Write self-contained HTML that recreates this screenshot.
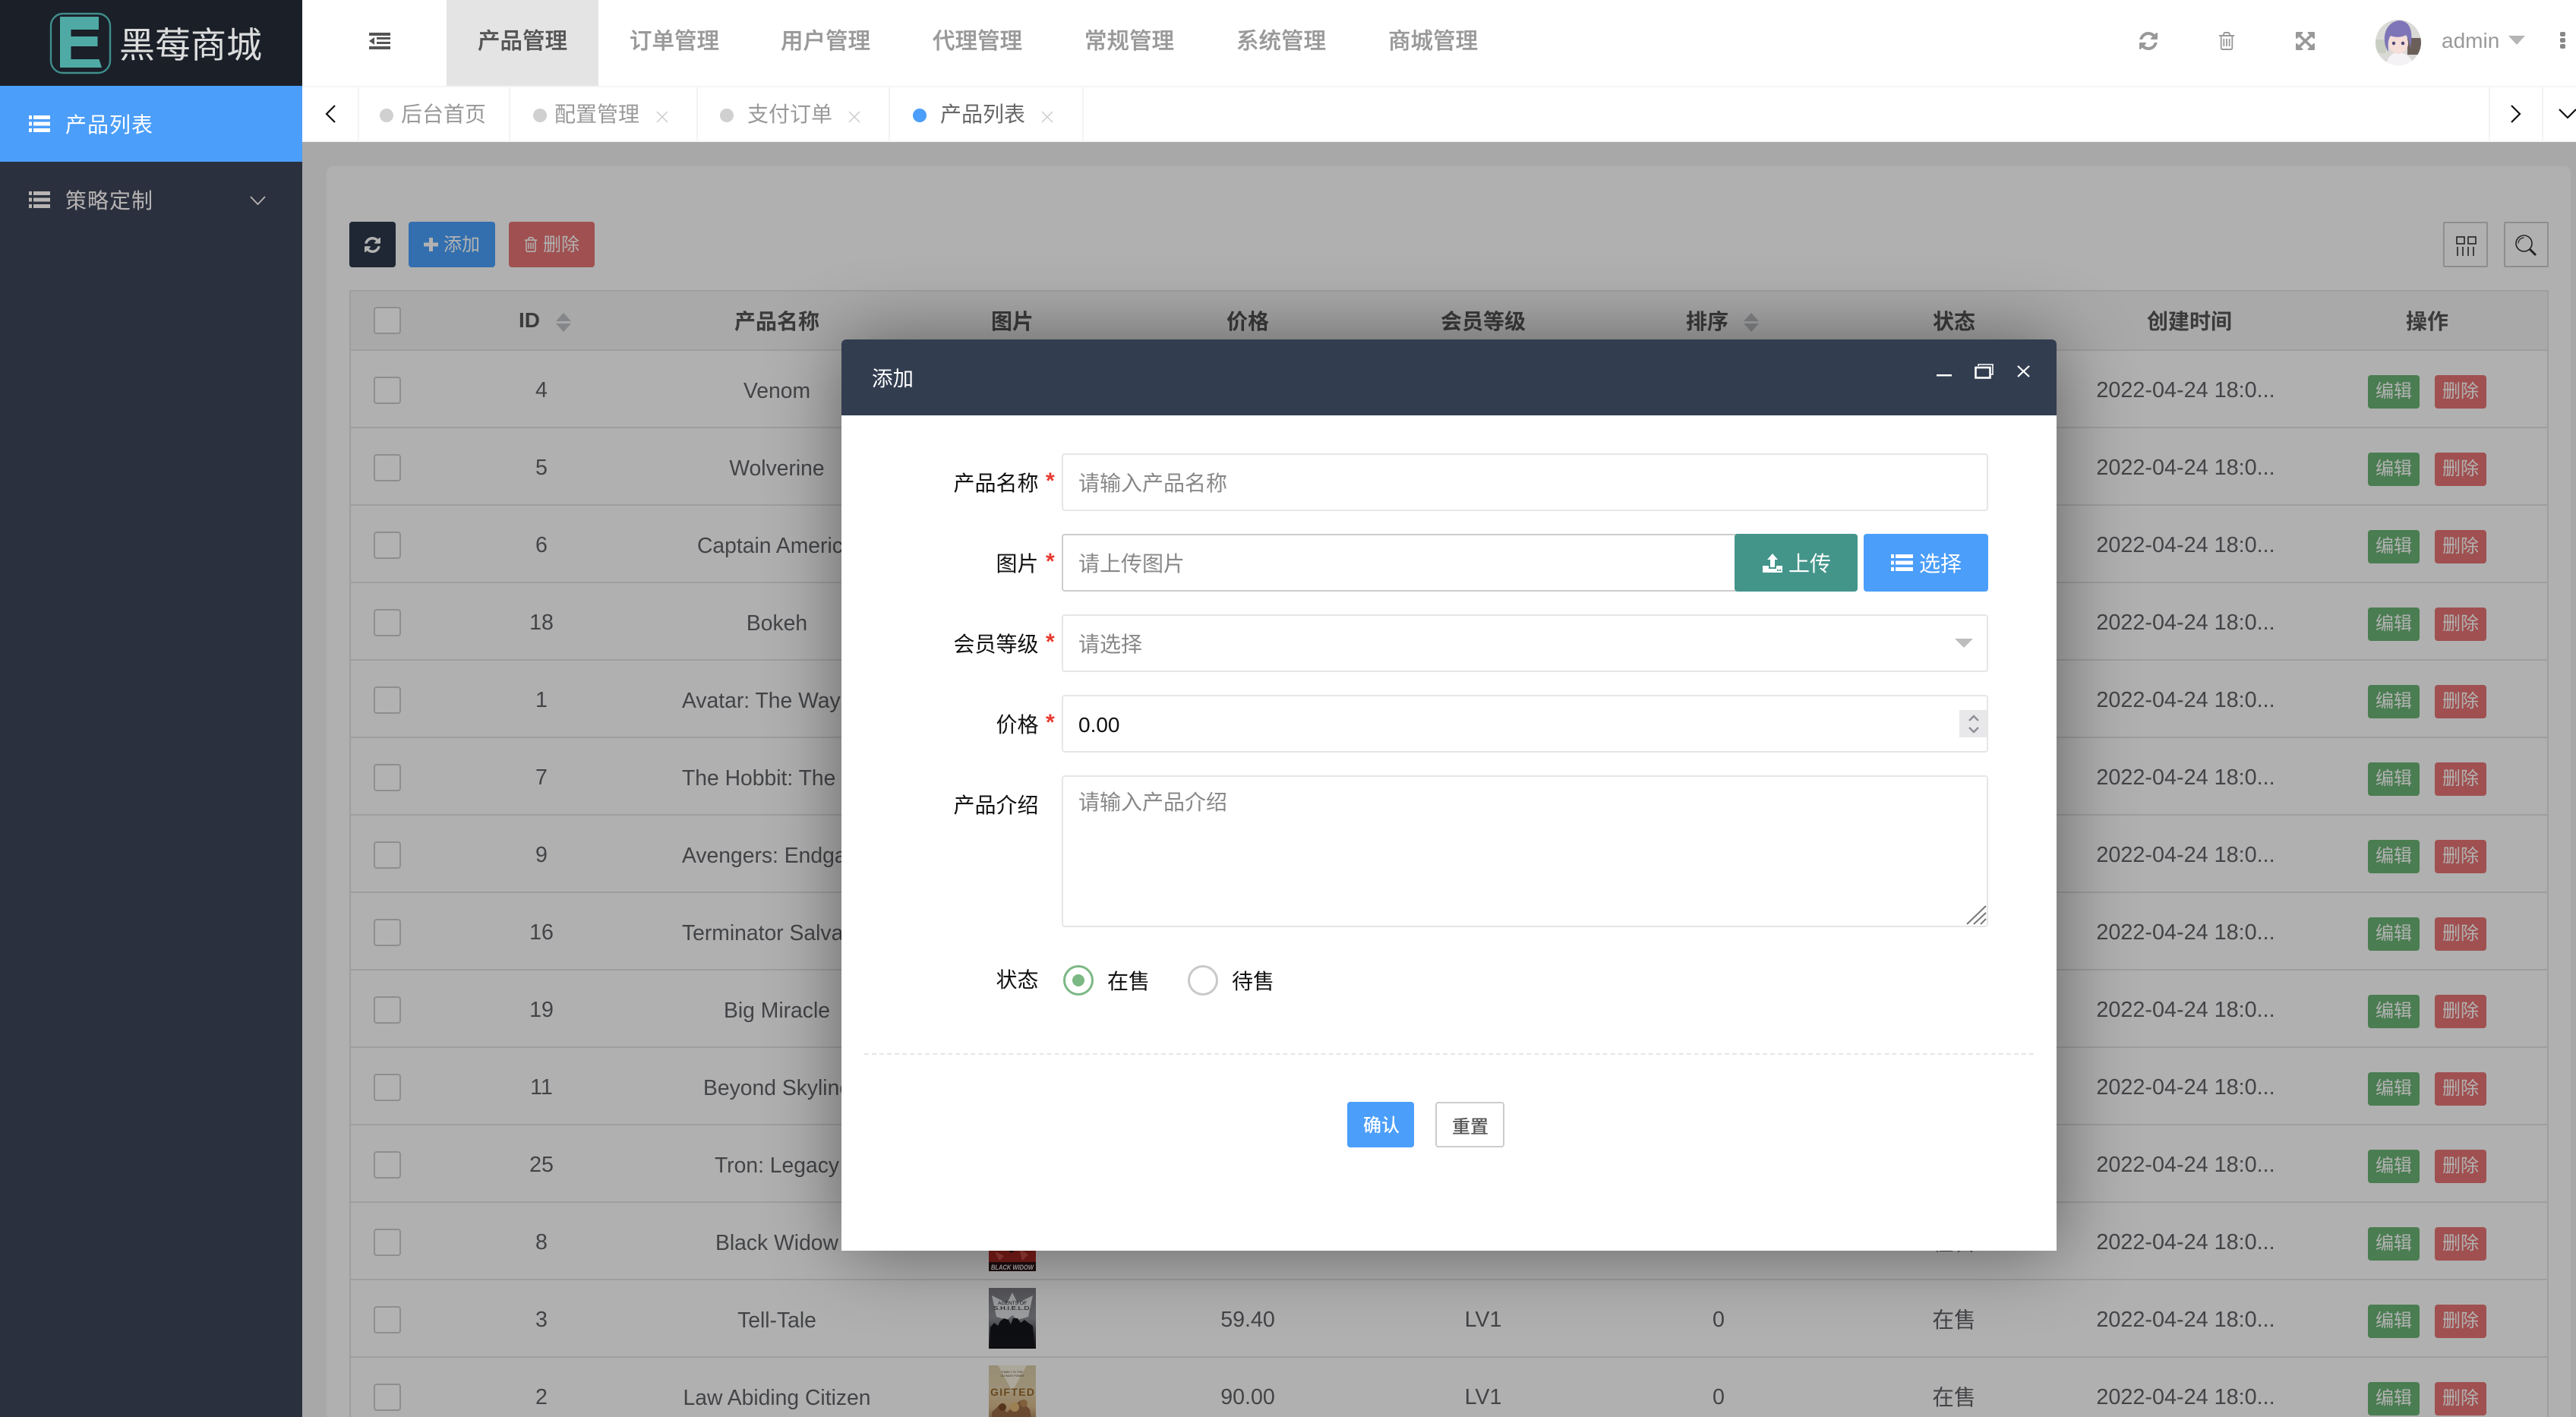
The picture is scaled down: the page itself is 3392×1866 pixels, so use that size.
<!DOCTYPE html>
<html lang="zh">
<head>
<meta charset="utf-8">
<title>黑莓商城</title>
<style>
*{box-sizing:border-box;margin:0;padding:0}
html,body{width:3392px;height:1866px;overflow:hidden;background:#fff}
body{position:relative;font-family:"Liberation Sans","Noto Sans CJK SC",sans-serif;font-size:28px}
.t{position:absolute;white-space:nowrap;line-height:40px;height:40px}
svg{position:absolute;display:block;overflow:visible}
#side{position:absolute;left:0;top:0;width:398px;height:1866px;background:#2a303d}
#logo{position:absolute;left:0;top:0;width:398px;height:113px;background:#1a1f28}
#act{position:absolute;left:0;top:113px;width:398px;height:100px;background:#4b9ef9}
#top{position:absolute;left:398px;top:0;width:2994px;height:113px;background:#fff}
.nav{color:#999;font-weight:500;-webkit-text-stroke:.3px #999}
#tabs{position:absolute;left:398px;top:113px;width:2994px;height:74px;background:#fff;border-top:2px solid #f5f5f5;border-bottom:2px solid #f5f5f5}
.sep{position:absolute;top:115px;width:2px;height:70px;background:#f3f3f3}
.dot{position:absolute;width:18px;height:18px;border-radius:50%;background:#d0d0d0;top:143px}
.tt{color:#999;top:131px}
.x{position:absolute;top:146px;width:16px;height:16px}
#content{position:absolute;left:398px;top:187px;width:2994px;height:1679px;overflow:hidden;background:#f1f1f1}
#card{position:absolute;left:32px;top:32px;width:2955px;height:1700px;background:#fcfcfc;border-radius:8px}
#shade{position:absolute;left:0;top:0;width:2994px;height:1679px;background:rgba(0,0,0,.3)}
table{position:absolute;left:62px;top:195px;width:2896px;border-collapse:separate;border-spacing:0;table-layout:fixed;font-size:28.6px;color:#606266}
th{height:80px;background:#f2f2f2;color:#555;font-size:28px;font-weight:bold;border-top:2px solid #e2e2e2;border-bottom:2px solid #e2e2e2;text-align:center;white-space:nowrap;position:relative}
td{height:102px;border-bottom:2px solid #e2e2e2;text-align:center;white-space:nowrap;overflow:hidden;position:relative}
td:nth-child(2),td:nth-child(3),td:nth-child(5),td:nth-child(6),td:nth-child(7),td:nth-child(9){padding-top:4px}
td:nth-child(9){padding-right:10px;font-size:28.8px}
th:first-child,td:first-child{border-left:2px solid #e2e2e2}
th:last-child,td:last-child{border-right:2px solid #e2e2e2}
.c{display:block;width:36px;height:36px;border:2px solid #ccc;border-radius:4px;margin-left:30px;background:#fff}
td .c{height:36px;position:relative;top:2px}
td.n{text-align:left;font-size:28.3px}
.ops{text-align:left;padding-left:80px}
.ops b{display:inline-block;width:68px;height:44px;border-radius:4px;color:#fff;font-size:24px;font-weight:normal;line-height:44px;text-align:center;position:relative;top:4px}
.g{background:#6ab475;margin-right:20px}
.r{background:#e57373}
.p{display:block;width:62px;height:80px;margin:0 auto;position:relative;overflow:hidden;left:0}
.tb{position:absolute;top:105px;height:60px;border-radius:4px;color:#fff;font-size:24px}
.sa{position:absolute;width:0;height:0;border-left:10px solid transparent;border-right:10px solid transparent}
#dlg{position:absolute;left:710px;top:260px;width:1600px;height:1200px;background:#fff;border-radius:6px 6px 0 0;box-shadow:2px 2px 100px rgba(0,0,0,.45)}
#dh{position:absolute;left:1108px;top:447px;width:1600px;height:100px;background:#323e50;border-radius:6px 6px 0 0}
.in{position:absolute;left:1398px;width:1220px;height:76px;border:2px solid #e6e6e6;border-radius:4px;background:#fff}
.l{color:#111;text-align:right;width:200px;left:1167.500px}
.ph{color:#888;left:1420px}
.st{color:#e8392f;font-weight:bold;left:1377px;font-size:30px}
</style>
</head>
<body>

<div id="side">
  <div id="logo"></div>
  <div id="act"></div>
</div>
<svg style="left:0;top:0" width="398" height="113" viewBox="0 0 398 113">
  <rect x="67" y="18" width="78" height="78" rx="16" fill="none" stroke="#3f8f8b" stroke-width="2.4"/>
  <path d="M79 22H130V39H93.500V48H128.500V61H93.500V78H130.500L134 89H79Z" fill="#4faaa5"/>
</svg>
<div class="t" style="left:157px;top:30px;font-size:47px;line-height:60px;height:60px;color:#ddd">黑莓商城</div>
<svg style="left:38px;top:152px" width="28" height="22"><g fill="#fff"><rect width="4" height="5"/><rect x="6" width="22" height="5"/><rect y="8.500" width="4" height="5"/><rect x="6" y="8.500" width="22" height="5"/><rect y="17" width="4" height="5"/><rect x="6" y="17" width="22" height="5"/></g></svg>
<div class="t" style="left:86px;top:145px;color:#fff;letter-spacing:1px">产品列表</div>
<svg style="left:38px;top:252px" width="28" height="22"><g fill="#b8b4b4"><rect width="4" height="5"/><rect x="6" width="22" height="5"/><rect y="8.500" width="4" height="5"/><rect x="6" y="8.500" width="22" height="5"/><rect y="17" width="4" height="5"/><rect x="6" y="17" width="22" height="5"/></g></svg>
<div class="t" style="left:86px;top:245px;color:#b8b4b4;letter-spacing:1px">策略定制</div>
<svg style="left:329px;top:258px" width="21" height="12"><path d="M1 1L10.500 11L20 1" fill="none" stroke="#b8b4b4" stroke-width="1.800"/></svg>

<div id="top"></div>
<div style="position:absolute;left:588px;top:0;width:200px;height:113px;background:#e4e4e4"></div>
<svg style="left:486px;top:43px" width="28" height="22"><g fill="#555"><rect width="28" height="4"/><rect x="10" y="6" width="18" height="3"/><rect x="10" y="12" width="18" height="3"/><rect y="18" width="28" height="4"/><path d="M7 6V16L0 11Z"/></g></svg>
<div class="t nav" style="left:629px;top:35px;color:#555;-webkit-text-stroke:.3px #555;font-size:29.500px">产品管理</div>
<div class="t nav" style="left:829px;top:35px;font-size:29.500px">订单管理</div>
<div class="t nav" style="left:1028px;top:35px;font-size:29.500px">用户管理</div>
<div class="t nav" style="left:1228px;top:35px;font-size:29.500px">代理管理</div>
<div class="t nav" style="left:1428px;top:35px;font-size:29.500px">常规管理</div>
<div class="t nav" style="left:1628px;top:35px;font-size:29.500px">系统管理</div>
<div class="t nav" style="left:1828px;top:35px;font-size:29.500px">商城管理</div>

<svg style="left:2817px;top:42px" width="24" height="24" viewBox="128 128 1536 1536" preserveAspectRatio="none"><path fill="#999" d="M1639 1056q0 5-1 7-64 268-268 434.500t-478 166.500q-146 0-282.500-55t-243.500-157l-129 129q-19 19-45 19t-45-19-19-45v-448q0-26 19-45t45-19h448q26 0 45 19t19 45-19 45l-137 137q71 66 161 102t187 36q134 0 250-65t186-179q11-17 53-117 8-23 30-23h192q13 0 22.500 9.500t9.500 22.500zm25-800v448q0 26-19 45t-45 19h-448q-26 0-45-19t-19-45 19-45l138-138q-148-137-349-137-134 0-250 65t-186 179q-11 17-53 117-8 23-30 23h-199q-13 0-22.500-9.500t-9.500-22.500v-7q65-268 270-434.500t480-166.500q146 0 284 55.500t245 156.500l130-129q19-19 45-19t45 19 19 45z"/></svg>
<svg style="left:2921px;top:42px" width="22" height="24" viewBox="128 128 1536 1536" preserveAspectRatio="none"><path fill="#999" d="M704 736v576q0 14-9 23t-23 9h-64q-14 0-23-9t-9-23v-576q0-14 9-23t23-9h64q14 0 23 9t9 23zm256 0v576q0 14-9 23t-23 9h-64q-14 0-23-9t-9-23v-576q0-14 9-23t23-9h64q14 0 23 9t9 23zm256 0v576q0 14-9 23t-23 9h-64q-14 0-23-9t-9-23v-576q0-14 9-23t23-9h64q14 0 23 9t9 23zm128 724v-948h-896v948q0 22 7 40.500t14.500 27 10.500 8.500h832q3 0 10.500-8.500t14.500-27 7-40.500zm-672-1076h448l-48-117q-7-9-17-11h-317q-10 2-17 11zm928 32v64q0 14-9 23t-23 9h-96v948q0 83-47 143.500t-113 60.500h-832q-66 0-113-58.500t-47-141.500v-952h-96q-14 0-23-9t-9-23v-64q0-14 9-23t23-9h309l70-167q15-37 54-63t79-26h320q40 0 79 26t54 63l70 167h309q14 0 23 9t9 23z"/></svg>
<svg style="left:3023px;top:42px" width="25" height="24" viewBox="128 128 1536 1536" preserveAspectRatio="none"><path fill="#999" d="M1411 541l-355 355 355 355 144-144q29-31 70-14 39 17 39 59v448q0 26-19 45t-45 19h-448q-42 0-59-40-17-39 14-69l144-144-355-355-355 355 144 144q31 30 14 69-17 40-59 40h-448q-26 0-45-19t-19-45v-448q0-42 40-59 39-17 69 14l144 144 355-355-355-355-144 144q-19 19-45 19-9 0-24-5-40-17-40-59v-448q0-26 19-45t45-19h448q42 0 59 40 17 39-14 69l-144 144 355 355 355-355-144-144q-31-30-14-69 17-40 59-40h448q26 0 45 19t19 45v448q0 42-39 59-13 5-25 5-26 0-45-19z"/></svg>
<svg style="left:3128px;top:26px" width="60" height="60" viewBox="0 0 60 60">
  <defs><clipPath id="av"><circle cx="30" cy="30" r="30"/></clipPath></defs>
  <g clip-path="url(#av)">
    <rect width="60" height="60" fill="#d9d9d6"/>
    <rect x="42" y="24" width="18" height="22" fill="#6b5f5a"/>
    <rect x="0" y="26" width="14" height="18" fill="#c8cfc2"/>
    <path d="M14 60C16 48 22 43 30 43C40 43 48 50 50 60Z" fill="#f4f2f4"/>
    <ellipse cx="30" cy="31" rx="13" ry="14" fill="#f5ddd8"/>
    <path d="M13 34C8 14 20 1 32 1C46 2 50 16 46 38C45 30 43 24 40 20C34 24 24 23 20 21C17 25 16 30 17 42C15 40 14 37 13 34Z" fill="#7d75b8"/>
    <circle cx="24" cy="31" r="2.200" fill="#4a4572"/><circle cx="36" cy="31" r="2.200" fill="#4a4572"/>
  </g>
</svg>
<div class="t" style="left:3215px;top:34px;color:#999">admin</div>
<div style="position:absolute;left:3303px;top:47px;width:0;height:0;border-left:11px solid transparent;border-right:11px solid transparent;border-top:12px solid #b5b5b5"></div>
<svg style="left:3371px;top:42px" width="7" height="22"><g fill="#888"><rect width="7" height="6" rx="2"/><rect y="8" width="7" height="6" rx="2"/><rect y="16" width="7" height="6" rx="2"/></g></svg>

<div id="tabs"></div>
<div class="sep" style="left:471px"></div>
<div class="sep" style="left:670px"></div>
<div class="sep" style="left:917px"></div>
<div class="sep" style="left:1170px"></div>
<div class="sep" style="left:1425px"></div>
<div class="sep" style="left:3277px"></div>
<div class="sep" style="left:3347px"></div>
<svg style="left:428px;top:138px" width="14" height="24"><path d="M13 1L2 12L13 23" fill="none" stroke="#111" stroke-width="2.200"/></svg>
<div class="dot" style="left:500px"></div>
<div class="t tt" style="left:528px">后台首页</div>
<div class="dot" style="left:702px"></div>
<div class="t tt" style="left:730px">配置管理</div>
<svg class="x" style="left:864px"><path d="M1 1L15 15M15 1L1 15" stroke="#ccc" stroke-width="1.500"/></svg>
<div class="dot" style="left:948px"></div>
<div class="t tt" style="left:984px">支付订单</div>
<svg class="x" style="left:1117px"><path d="M1 1L15 15M15 1L1 15" stroke="#ccc" stroke-width="1.500"/></svg>
<div class="dot" style="left:1202px;background:#4b9ef9"></div>
<div class="t tt" style="left:1238px;color:#666">产品列表</div>
<svg class="x" style="left:1371px"><path d="M1 1L15 15M15 1L1 15" stroke="#ccc" stroke-width="1.500"/></svg>
<svg style="left:3306px;top:138px" width="14" height="24"><path d="M1 1L12 12L1 23" fill="none" stroke="#111" stroke-width="2.200"/></svg>
<svg style="left:3369px;top:143px" width="26" height="14"><path d="M1 1L12 12L23 1" fill="none" stroke="#111" stroke-width="2.200"/></svg>

<div id="content">
  <div id="card"></div>

  <div class="tb" style="left:62px;width:61px;background:#2b394a"></div>
  <svg style="left:82px;top:125px" width="21" height="21" viewBox="128 128 1536 1536" preserveAspectRatio="none"><path fill="#fff" d="M1639 1056q0 5-1 7-64 268-268 434.500t-478 166.500q-146 0-282.500-55t-243.500-157l-129 129q-19 19-45 19t-45-19-19-45v-448q0-26 19-45t45-19h448q26 0 45 19t19 45-19 45l-137 137q71 66 161 102t187 36q134 0 250-65t186-179q11-17 53-117 8-23 30-23h192q13 0 22.500 9.500t9.500 22.500zm25-800v448q0 26-19 45t-45 19h-448q-26 0-45-19t-19-45 19-45l138-138q-148-137-349-137-134 0-250 65t-186 179q-11 17-53 117-8 23-30 23h-199q-13 0-22.500-9.500t-9.500-22.500v-7q65-268 270-434.500t480-166.500q146 0 284 55.500t245 156.500l130-129q19-19 45-19t45 19 19 45z"/></svg>
  <div class="tb" style="left:140px;width:114px;background:#4a9ffa"></div>
  <svg style="left:160px;top:126px" width="19" height="18"><path d="M7 0H12V6.500H19V11.500H12V18H7V11.500H0V6.500H7Z" fill="#fff"/></svg>
  <div class="t" style="left:186px;top:116px;color:#fff;font-size:24px">添加</div>
  <div class="tb" style="left:272px;width:113px;background:#e57373"></div>
  <svg style="left:292px;top:125px" width="18" height="20" viewBox="128 128 1536 1536" preserveAspectRatio="none"><path fill="#fff" d="M704 736v576q0 14-9 23t-23 9h-64q-14 0-23-9t-9-23v-576q0-14 9-23t23-9h64q14 0 23 9t9 23zm256 0v576q0 14-9 23t-23 9h-64q-14 0-23-9t-9-23v-576q0-14 9-23t23-9h64q14 0 23 9t9 23zm256 0v576q0 14-9 23t-23 9h-64q-14 0-23-9t-9-23v-576q0-14 9-23t23-9h64q14 0 23 9t9 23zm128 724v-948h-896v948q0 22 7 40.500t14.500 27 10.500 8.500h832q3 0 10.500-8.500t14.500-27 7-40.500zm-672-1076h448l-48-117q-7-9-17-11h-317q-10 2-17 11zm928 32v64q0 14-9 23t-23 9h-96v948q0 83-47 143.500t-113 60.500h-832q-66 0-113-58.500t-47-141.500v-952h-96q-14 0-23-9t-9-23v-64q0-14 9-23t23-9h309l70-167q15-37 54-63t79-26h320q40 0 79 26t54 63l70 167h309q14 0 23 9t9 23z"/></svg>
  <div class="t" style="left:317px;top:116px;color:#fff;font-size:24px">删除</div>

  <div class="tb" style="left:2819px;width:59px;border:2px solid #ccc;border-radius:2px"></div>
  <svg style="left:2836px;top:124px" width="27" height="26"><g fill="none" stroke="#333" stroke-width="1.600"><rect x="1" y="1" width="10" height="9"/><rect x="16" y="1" width="10" height="9"/><path d="M2 14V26M9 14V26M16 14V26M23 14V26"/></g></svg>
  <div class="tb" style="left:2899px;width:59px;border:2px solid #ccc;border-radius:2px"></div>
  <svg style="left:2914px;top:122px" width="28" height="28"><circle cx="11.500" cy="11.500" r="10.500" fill="none" stroke="#333" stroke-width="1.600"/><path d="M4 11.500A7.500 7.500 0 0 1 11.500 4" fill="none" stroke="#333" stroke-width="1.200"/><path d="M19 19L27 27" stroke="#333" stroke-width="3"/></svg>

  <table>
    <colgroup><col style="width:98px"><col style="width:310px"><col style="width:310px"><col style="width:310px"><col style="width:310px"><col style="width:310px"><col style="width:310px"><col style="width:310px"><col style="width:310px"><col></colgroup>
    <tr>
      <th style="text-align:left"><i class="c"></i></th>
      <th style="text-align:left;padding-left:125px">ID</th>
      <th>产品名称</th><th>图片</th><th>价格</th><th>会员等级</th>
      <th style="text-align:left;padding-left:112px">排序</th>
      <th>状态</th><th>创建时间</th><th>操作</th>
    </tr>
    <tr><td style="text-align:left"><i class="c"></i></td><td>4</td><td class="n" style="text-align:center">Venom</td><td></td><td>39.90</td><td>LV1</td><td>0</td><td>在售</td><td>2022-04-24 18:0...</td><td class="ops"><b class="g">编辑</b><b class="r">删除</b></td></tr>
    <tr><td style="text-align:left"><i class="c"></i></td><td>5</td><td class="n" style="text-align:center">Wolverine</td><td></td><td>39.90</td><td>LV1</td><td>0</td><td>在售</td><td>2022-04-24 18:0...</td><td class="ops"><b class="g">编辑</b><b class="r">删除</b></td></tr>
    <tr><td style="text-align:left"><i class="c"></i></td><td>6</td><td class="n" style="padding-left:50px">Captain America</td><td></td><td>39.90</td><td>LV1</td><td>0</td><td>在售</td><td>2022-04-24 18:0...</td><td class="ops"><b class="g">编辑</b><b class="r">删除</b></td></tr>
    <tr><td style="text-align:left"><i class="c"></i></td><td>18</td><td class="n" style="text-align:center">Bokeh</td><td></td><td>39.90</td><td>LV1</td><td>0</td><td>在售</td><td>2022-04-24 18:0...</td><td class="ops"><b class="g">编辑</b><b class="r">删除</b></td></tr>
    <tr><td style="text-align:left"><i class="c"></i></td><td>1</td><td class="n" style="padding-left:30px">Avatar: The Way of Water</td><td></td><td>39.90</td><td>LV1</td><td>0</td><td>在售</td><td>2022-04-24 18:0...</td><td class="ops"><b class="g">编辑</b><b class="r">删除</b></td></tr>
    <tr><td style="text-align:left"><i class="c"></i></td><td>7</td><td class="n" style="padding-left:30px">The Hobbit: The Battle</td><td></td><td>39.90</td><td>LV1</td><td>0</td><td>在售</td><td>2022-04-24 18:0...</td><td class="ops"><b class="g">编辑</b><b class="r">删除</b></td></tr>
    <tr><td style="text-align:left"><i class="c"></i></td><td>9</td><td class="n" style="padding-left:30px">Avengers: Endgame</td><td></td><td>39.90</td><td>LV1</td><td>0</td><td>在售</td><td>2022-04-24 18:0...</td><td class="ops"><b class="g">编辑</b><b class="r">删除</b></td></tr>
    <tr><td style="text-align:left"><i class="c"></i></td><td>16</td><td class="n" style="padding-left:30px">Terminator Salvation</td><td></td><td>39.90</td><td>LV1</td><td>0</td><td>在售</td><td>2022-04-24 18:0...</td><td class="ops"><b class="g">编辑</b><b class="r">删除</b></td></tr>
    <tr><td style="text-align:left"><i class="c"></i></td><td>19</td><td class="n" style="text-align:center">Big Miracle</td><td></td><td>39.90</td><td>LV1</td><td>0</td><td>在售</td><td>2022-04-24 18:0...</td><td class="ops"><b class="g">编辑</b><b class="r">删除</b></td></tr>
    <tr><td style="text-align:left"><i class="c"></i></td><td>11</td><td class="n" style="padding-left:58px">Beyond Skyline</td><td></td><td>39.90</td><td>LV1</td><td>0</td><td>在售</td><td>2022-04-24 18:0...</td><td class="ops"><b class="g">编辑</b><b class="r">删除</b></td></tr>
    <tr><td style="text-align:left"><i class="c"></i></td><td>25</td><td class="n" style="text-align:center">Tron: Legacy</td><td></td><td>39.90</td><td>LV1</td><td>0</td><td>在售</td><td>2022-04-24 18:0...</td><td class="ops"><b class="g">编辑</b><b class="r">删除</b></td></tr>
    <tr><td style="text-align:left"><i class="c"></i></td><td>8</td><td class="n" style="text-align:center">Black Widow</td><td><span class="p"><svg width="62" height="80" style="left:0;top:0" viewBox="0 0 62 80"><rect width="62" height="80" fill="#2a1416"/><path d="M0 50L14 44L30 56L46 42L62 50V68H0Z" fill="#b02a24"/><path d="M8 54L20 60L14 66ZM40 50L52 58L44 66Z" fill="#e0584c"/><text x="31" y="78" font-size="9.500" font-weight="bold" font-style="italic" text-anchor="middle" fill="#f4f4f4" font-family="Liberation Sans" textLength="56" lengthAdjust="spacingAndGlyphs">BLACK WIDOW</text></svg></span></td><td>39.90</td><td>LV1</td><td>0</td><td>在售</td><td>2022-04-24 18:0...</td><td class="ops"><b class="g">编辑</b><b class="r">删除</b></td></tr>
    <tr><td style="text-align:left"><i class="c"></i></td><td>3</td><td class="n" style="text-align:center">Tell-Tale</td><td><span class="p"><svg width="62" height="80" style="left:0;top:0" viewBox="0 0 62 80"><defs><linearGradient id="sh" x1="0" y1="0" x2="0" y2="1"><stop offset="0" stop-color="#7a7a80"/><stop offset=".5" stop-color="#8a8d92"/><stop offset=".8" stop-color="#3a3c40"/><stop offset="1" stop-color="#111113"/></linearGradient></defs><rect width="62" height="80" fill="url(#sh)"/><path d="M4 10L24 20L31 6L38 20L58 10L52 38L38 42L31 36L24 42L10 38Z" fill="#dfe1e4"/><text x="31" y="22" font-size="6" text-anchor="middle" fill="#222" font-family="Liberation Sans" textLength="38" lengthAdjust="spacingAndGlyphs">AGENTS OF</text><text x="31" y="29" font-size="7.500" text-anchor="middle" fill="#111" font-family="Liberation Sans" textLength="50" lengthAdjust="spacingAndGlyphs">S.H.I.E.L.D.</text><path d="M2 74V52L7 46L12 50L15 44L20 40L26 42L29 48L32 40L38 40L42 46L47 42L52 46L58 50L60 74L56 78H6Z" fill="#15161a"/></svg></span></td><td>59.40</td><td>LV1</td><td>0</td><td>在售</td><td>2022-04-24 18:0...</td><td class="ops"><b class="g">编辑</b><b class="r">删除</b></td></tr>
    <tr><td style="text-align:left"><i class="c"></i></td><td>2</td><td class="n" style="text-align:center">Law Abiding Citizen</td><td><span class="p"><svg width="62" height="80" style="left:0;top:0" viewBox="0 0 62 80"><defs><linearGradient id="gf" x1="0" y1="0" x2="0" y2="1"><stop offset="0" stop-color="#d8cba8"/><stop offset=".4" stop-color="#e0d0ac"/><stop offset=".7" stop-color="#d8b888"/><stop offset="1" stop-color="#8a6a48"/></linearGradient></defs><rect width="62" height="80" fill="url(#gf)"/><path d="M12 0L31 34L50 0Z" fill="#f6f0de"/><text x="31" y="10" font-size="4" text-anchor="middle" fill="#5a4a30" font-family="Liberation Sans">FAMILY IS THE</text><text x="31" y="15" font-size="3.500" text-anchor="middle" fill="#5a4a30" font-family="Liberation Sans">ULTIMATE POWER</text><text x="31" y="40" font-size="14" font-weight="bold" text-anchor="middle" fill="#96682c" font-family="Liberation Sans" textLength="58">GIFTED</text><path d="M4 80V62L14 52L24 62L32 54L42 46L54 58L58 80Z" fill="#9a6a48"/><circle cx="18" cy="55" r="5" fill="#7a4a2a"/><circle cx="34" cy="55" r="6" fill="#e0b878"/><circle cx="46" cy="50" r="5" fill="#b88858"/></svg></span></td><td>90.00</td><td>LV1</td><td>0</td><td>在售</td><td>2022-04-24 18:0...</td><td class="ops"><b class="g">编辑</b><b class="r">删除</b></td></tr>
  </table>
  <div class="sa" style="left:334px;top:225px;border-bottom:11px solid #bfc1c5"></div>
  <div class="sa" style="left:334px;top:239px;border-top:11px solid #bfc1c5"></div>
  <div class="sa" style="left:1898px;top:225px;border-bottom:11px solid #bfc1c5"></div>
  <div class="sa" style="left:1898px;top:239px;border-top:11px solid #bfc1c5"></div>

  <div id="shade"></div>
  <div id="dlg"></div>
</div>

<div id="dh"></div>
<div class="t" style="left:1148px;top:479px;color:#fff;font-size:27.500px">添加</div>
<svg style="left:2550px;top:480px" width="20" height="18"><rect y="13" width="20" height="2.500" fill="#fff"/></svg>
<svg style="left:2600px;top:479px" width="26" height="20"><path d="M5 3V1H24V14H21" fill="none" stroke="#fff" stroke-width="1.600"/><rect x="1.500" y="5" width="19" height="13.500" fill="none" stroke="#fff" stroke-width="2.600"/></svg>
<svg style="left:2656px;top:481px" width="17" height="16"><path d="M1 1L16 15M16 1L1 15" stroke="#fff" stroke-width="2.200"/></svg>

<div class="t l" style="top:617px">产品名称</div><div class="t st" style="top:614px">*</div>
<div class="in" style="top:597px"></div>
<div class="t ph" style="top:617px">请输入产品名称</div>

<div class="t l" style="top:723px">图片</div><div class="t st" style="top:720px">*</div>
<div class="in" style="top:703px;border-color:#ccc;width:900px"></div>
<div class="t ph" style="top:723px">请上传图片</div>
<div style="position:absolute;left:2284px;top:703px;width:162px;height:76px;background:#43958a;border-radius:4px"></div>
<svg style="left:2321px;top:729px" width="26" height="25"><path d="M13 0L20 8H16V18H10V8H6Z" fill="#fff"/><path d="M0 16H8V20H18V16H26V24Q26 25 25 25H1Q0 25 0 24Z" fill="#fff"/><rect x="19" y="21" width="2" height="2" fill="#43958a"/><rect x="22" y="21" width="2" height="2" fill="#43958a"/></svg>
<div class="t" style="left:2355px;top:723px;color:#fff">上传</div>
<div style="position:absolute;left:2454px;top:703px;width:164px;height:76px;background:#4b9ef9;border-radius:4px"></div>
<svg style="left:2490px;top:730px" width="29" height="22"><g fill="#fff"><rect width="4" height="5"/><rect x="6" width="23" height="5"/><rect y="8.500" width="4" height="5"/><rect x="6" y="8.500" width="23" height="5"/><rect y="17" width="4" height="5"/><rect x="6" y="17" width="23" height="5"/></g></svg>
<div class="t" style="left:2527px;top:723px;color:#fff">选择</div>

<div class="t l" style="top:829px">会员等级</div><div class="t st" style="top:826px">*</div>
<div class="in" style="top:809px"></div>
<div class="t ph" style="top:829px">请选择</div>
<div style="position:absolute;left:2574px;top:841px;width:0;height:0;border-left:12px solid transparent;border-right:12px solid transparent;border-top:12px solid #bdbdbd"></div>

<div class="t l" style="top:935px">价格</div><div class="t st" style="top:932px">*</div>
<div class="in" style="top:915px"></div>
<div class="t" style="left:1420px;top:935px;color:#111">0.00</div>
<div style="position:absolute;left:2580px;top:935px;width:36px;height:36px;background:#e8e8ea"></div>
<svg style="left:2592px;top:941px" width="14" height="26"><path d="M1 8L7 2L13 8M1 17L7 23L13 17" fill="none" stroke="#8e8e99" stroke-width="2.400"/></svg>

<div class="t l" style="top:1041px">产品介绍</div>
<div class="in" style="top:1021px;height:200px"></div>
<div class="t ph" style="top:1037px">请输入产品介绍</div>
<svg style="left:2589px;top:1192px" width="27" height="26"><path d="M1 25L26 1M10 25L26 10M19 25L26 18" stroke="#777" stroke-width="2" fill="none"/></svg>

<div class="t l" style="top:1271px">状态</div>
<div style="position:absolute;left:1400px;top:1271px;width:40px;height:40px;border:3px solid #7cb885;border-radius:50%"></div>
<div style="position:absolute;left:1412px;top:1283px;width:16px;height:16px;background:#7cb885;border-radius:50%"></div>
<div class="t" style="left:1458px;top:1273px;color:#111">在售</div>
<div style="position:absolute;left:1564px;top:1271px;width:40px;height:40px;border:3px solid #c9c9c9;border-radius:50%"></div>
<div class="t" style="left:1622px;top:1273px;color:#111">待售</div>

<div style="position:absolute;left:1138px;top:1387px;width:1540px;height:0;border-top:2px dashed #e6e6e6"></div>

<div style="position:absolute;left:1774px;top:1451px;width:88px;height:60px;background:#4b9ef9;border-radius:4px"></div>
<div class="t" style="left:1795px;top:1463px;color:#fff;font-size:24px;font-weight:500">确认</div>
<div style="position:absolute;left:1890px;top:1451px;width:91px;height:60px;background:#fff;border:2px solid #ccc;border-radius:4px"></div>
<div class="t" style="left:1912px;top:1465px;color:#555;font-size:24px;font-weight:500">重置</div>

</body>
</html>
